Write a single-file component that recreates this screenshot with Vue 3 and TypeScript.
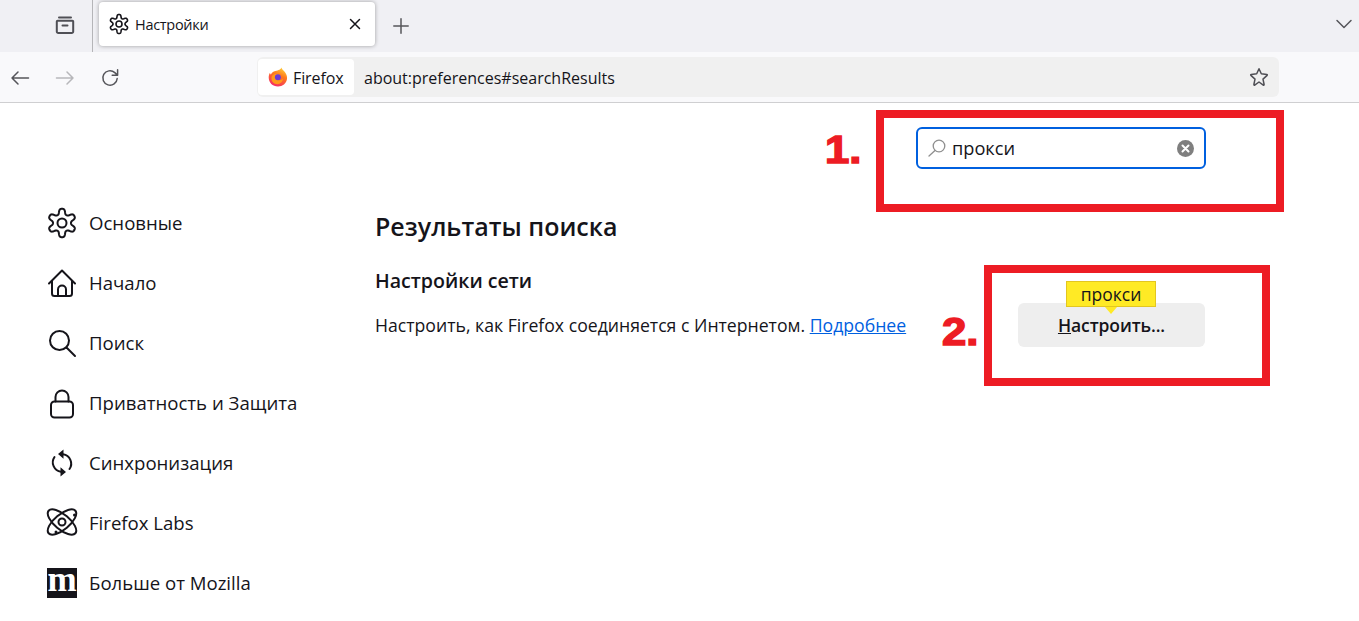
<script setup lang="ts">
interface NavItem { label: string; icon: string }
const nav: NavItem[] = [
  { label: 'Основные', icon: 'gear' },
  { label: 'Начало', icon: 'home' },
  { label: 'Поиск', icon: 'search' },
  { label: 'Приватность и Защита', icon: 'lock' },
  { label: 'Синхронизация', icon: 'sync' },
  { label: 'Firefox Labs', icon: 'labs' },
  { label: 'Больше от Mozilla', icon: 'moz' },
]
// Six-lobed gear outline, centred on 15,15 in a 30-unit box.
function gearPath(): string {
  const pts: string[] = []
  const steps = 144
  for (let i = 0; i < steps; i++) {
    const t = (i / steps) * Math.PI * 2
    const wave = Math.tanh(1.6 * Math.cos(6 * t)) / Math.tanh(1.6)
    const r = 11.6 + 2.6 * wave
    const x = 15 + r * Math.sin(t)
    const y = 15 - r * Math.cos(t)
    pts.push(`${i === 0 ? 'M' : 'L'}${x.toFixed(2)} ${y.toFixed(2)}`)
  }
  return pts.join('') + 'Z'
}
const gear = gearPath()
</script>

<template>
  <div class="page">
    <header class="tabbar">
      <div class="tab-left">
        <svg class="ico archive" viewBox="0 0 20 20" width="20" height="20"><path d="M4 2.500h12M2.600 5.800h14.800a.8.8 0 0 1 .8.8v10a1.500 1.500 0 0 1-1.500 1.500H3.300a1.500 1.500 0 0 1-1.500-1.500v-10a.8.8 0 0 1 .8-.8zM7.500 10.500h5" /></svg>
      </div>
      <div class="tab">
        <svg class="ico tab-gear" viewBox="0 0 30 30" width="20" height="20"><path :d="gear" /><circle cx="15" cy="15" r="4.500" /></svg>
        <span class="tab-title">Настройки</span>
        <svg class="ico tab-x" viewBox="0 0 12 12" width="12" height="12"><path d="M1.500 1.500l9 9M10.500 1.500l-9 9" /></svg>
      </div>
      <svg class="ico plus" viewBox="0 0 16 16" width="16" height="16"><path d="M8 .8v14.400M.8 8h14.400" /></svg>
      <svg class="ico chev" viewBox="0 0 16 10" width="16" height="10"><path d="M1 1.500l7 7 7-7" /></svg>
    </header>

    <nav class="toolbar">
      <svg class="ico tool" viewBox="0 0 18 14" width="18" height="14"><path d="M17.500 7H1M7 1L1 7l6 6" /></svg>
      <svg class="ico tool off" viewBox="0 0 18 14" width="18" height="14"><path d="M.5 7H17M11 1l6 6-6 6" /></svg>
      <svg class="ico tool" viewBox="0 0 18 18" width="18" height="18"><path d="M16.200 9.500A7.200 7.200 0 1 1 13.800 3.600L16.300 6M16.600.8v5.400h-5.400" /></svg>
      <div class="urlbar">
        <div class="chip">
          <svg class="fx" viewBox="0 0 20 20" width="20" height="20">
            <defs>
              <linearGradient id="fxa" x1="0.75" y1="0" x2="0.3" y2="1"><stop offset="0" stop-color="#ffd23c" /><stop offset=".4" stop-color="#ff7a1c" /><stop offset="1" stop-color="#f5296a" /></linearGradient>
            </defs>
            <path d="M13.500.5c.3 1.700 1.400 2.300 2.500 3.500 2.400 2.500 3.400 5.500 3 8-.6 4.500-4.400 7.500-9 7.500C4.500 19.500.7 15.500.7 10.500c0-1.800.4-3.600 1.300-4.800.1.900.4 1.500.9 1.900.6-1.700 2-2.900 3.600-3.400 2.500-.7 6-1 7-3.700z" fill="url(#fxa)" />
            <path d="M4.500 8.300c1.500-1.600 3.800-2 5.800-1.400 2 .6 3.200 2.500 2.400 4.200-.7 1.300-2.300 1.700-3.800 1.100 1.500 1.700 4.300 1.400 6-.6 0 3-2.400 5.600-5.600 5.600-3.200 0-5.800-2.600-5.800-5.700 0-1.200.2-2.200 1-3.200z" fill="#ff9a1a" />
            <circle cx="9.900" cy="10.200" r="3" fill="#6b3bd6" />
          </svg>
          <span class="chip-label">Firefox</span>
        </div>
        <span class="url">about:preferences#searchResults</span>
        <svg class="ico star" viewBox="0 0 20 20" width="20" height="20"><path d="M10 1.700l2.300 5.100 5.500.6c.5.100.7.700.3 1l-4.100 3.700 1.100 5.400c.1.500-.4.900-.8.600L10 15l-4.300 3.100c-.4.300-.9-.100-.8-.6L6 12.100 1.900 8.400c-.4-.3-.2-.9.300-1l5.500-.6z" /></svg>
      </div>
    </nav>

    <main class="prefs">
      <aside class="side">
        <div v-for="item in nav" :key="item.label" class="side-item">
          <span class="side-icon">
            <svg v-if="item.icon === 'gear'" class="ico" viewBox="0 0 30 30" width="30" height="30"><path :d="gear" /><circle cx="15" cy="15" r="4.500" /></svg>
            <svg v-else-if="item.icon === 'home'" class="ico" viewBox="0 0 30 30" width="30" height="30"><path d="M2 15.500L15 2.500l13 13M5 12.500v13a2.500 2.500 0 0 0 2.500 2.500h15a2.500 2.500 0 0 0 2.500-2.500v-13M11 28v-6.500a4 4 0 0 1 8 0V28" /></svg>
            <svg v-else-if="item.icon === 'search'" class="ico" viewBox="0 0 30 30" width="30" height="30"><circle cx="12.500" cy="12.500" r="9.500" /><path d="M19.500 19.500L28 28" /></svg>
            <svg v-else-if="item.icon === 'lock'" class="ico" viewBox="0 0 30 30" width="30" height="30"><rect x="4" y="13.500" width="22" height="16" rx="3.500" /><path d="M8.500 13.500V9a6.500 6.500 0 0 1 13 0v4.500" /></svg>
            <svg v-else-if="item.icon === 'sync'" class="ico" viewBox="0 0 30 30" width="30" height="30"><path d="M16 6.200A9.500 9.500 0 0 1 22.500 21M14 23.800A9.500 9.500 0 0 1 7.500 9" /><path class="fill" d="M16.500 1.500v9.200L11 6zM13.500 28.500v-9.200L19 24z" /></svg>
            <svg v-else-if="item.icon === 'labs'" class="ico" viewBox="0 0 30 30" width="30" height="30"><ellipse cx="15" cy="14" rx="17.500" ry="7.500" transform="rotate(40 15 14)" /><ellipse cx="15" cy="14" rx="17.500" ry="7.500" transform="rotate(-40 15 14)" /><circle cx="15" cy="14" r="3.500" /><circle class="fill" cx="27.500" cy="7" r="1.500" /><circle class="fill" cx="9" cy="24" r="1.500" /></svg>
            <span v-else class="moz">m</span>
          </span>
          <span class="side-label">{{ item.label }}</span>
        </div>
      </aside>

      <section class="content">
        <div class="search-row">
          <div class="search-box">
            <svg class="ico lens" viewBox="0 0 18 18" width="18" height="18"><circle cx="11" cy="7" r="5.800" /><path d="M7 11.500L1 17" /></svg>
            <span class="search-text">прокси</span>
            <svg class="clear" viewBox="0 0 17 17" width="17" height="17"><circle cx="8.500" cy="8.500" r="8.500" fill="#7f7f7f" /><path d="M5.500 5.500l6 6M11.500 5.500l-6 6" stroke="#fff" stroke-width="2" stroke-linecap="round" /></svg>
          </div>
        </div>
        <h1 class="title">Результаты поиска</h1>
        <div class="group">
          <div class="group-text">
            <h2 class="subtitle">Настройки сети</h2>
            <p class="desc">Настроить, как Firefox соединяется с Интернетом. <a class="link">Подробнее</a></p>
          </div>
          <div class="btn">
            <span class="spot">прокси</span>
            <span><u>Н</u>астроить...</span>
          </div>
        </div>
      </section>

      <div class="mark mark-1"></div>
      <span class="num num-1">1.</span>
      <div class="mark mark-2"></div>
      <span class="num num-2">2.</span>
    </main>
  </div>
</template>

<style>
html, body { margin: 0; background: #fff; overflow: hidden; }
</style>

<style scoped>
.page { width: 1359px; height: 621px; font-family: "Open Sans", "Noto Sans", sans-serif; color: #15141a; display: flex; flex-direction: column; overflow: hidden; }
.ico { fill: none; stroke: #15141a; stroke-width: 2; stroke-linecap: round; stroke-linejoin: round; flex: none; display: block; overflow: visible; }
.ico .fill { fill: #15141a; stroke: none; }

.tabbar { height: 52px; flex: none; background: #f0f0f4; display: flex; align-items: flex-start; box-sizing: border-box; }
.tab-left { width: 93px; height: 52px; box-sizing: border-box; border-right: 1px solid #b5b5b8; display: flex; align-items: center; justify-content: flex-end; padding: 0 17px 2px 0; margin-right: 5px; flex: none; }
.archive { stroke: #4f4f55; }
.tab { width: 276px; height: 44px; margin-top: 2px; background: #fff; border-radius: 4px; box-shadow: 0 0 4px rgba(0,0,0,.35); display: flex; align-items: center; padding: 0 14px 0 10px; box-sizing: border-box; flex: none; margin-left: 1px; }
.tab-gear { stroke-width: 2.400; }
.tab-title { font-size: 14.500px; margin-left: 6px; flex: 1; letter-spacing: -.3px; }
.tab-x { stroke-width: 1.500; }
.plus { stroke: #55555a; stroke-width: 1.500; margin: 18px 0 0 18px; }
.chev { stroke: #55555a; stroke-width: 1.500; margin: 19px 7px 0 auto; }

.toolbar { height: 51px; flex: none; box-sizing: border-box; background: #f9f9fb; border-bottom: 1px solid #cfcfd1; display: flex; align-items: center; padding-left: 11px; }
.tool { stroke: #55555a; stroke-width: 1.500; margin: 2px 27px 0 0; }
.tool.off { opacity: .4; }
.urlbar { width: 1022px; height: 40px; margin: 0 0 0 111px; background: #f0f0f0; border-radius: 6px; display: flex; align-items: center; padding-left: 1px; box-sizing: border-box; }
.chip { width: 96px; height: 36px; background: #fff; border-radius: 4px; display: flex; align-items: center; padding-left: 10px; box-sizing: border-box; flex: none; }
.fx { flex: none; }
.chip-label { font-size: 16px; margin-left: 5px; padding-top: 2px; letter-spacing: -.1px; }
.url { font-size: 16px; margin-left: 10px; padding-top: 2px; flex: 1; }
.star { stroke: #4f4f55; stroke-width: 1.500; margin-right: 10px; }

.prefs { flex: 1; display: flex; position: relative; min-height: 0; }
.side { width: 375px; flex: none; box-sizing: border-box; padding: 90px 0 0 47px; }
.side-item { height: 60px; display: flex; align-items: center; }
.side-icon { width: 30px; height: 30px; margin-right: 12px; flex: none; display: block; }
.side-label { font-size: 18.600px; margin-top: -2px; white-space: nowrap; }
.moz { display: flex; width: 30px; height: 30px; background: #15141a; color: #fff; font-family: "Liberation Serif", serif; font-weight: 700; font-size: 35px; line-height: 23px; align-items: flex-start; justify-content: center; }

.content { flex: 1; display: flex; flex-direction: column; min-width: 0; }
.search-row { padding: 24px 0 0 541px; }
.search-box { width: 290px; height: 42px; box-sizing: border-box; border: 2px solid #0060df; border-radius: 6px; display: flex; align-items: center; padding: 0 10px 0 10px; }
.lens { stroke: #8f8f8f; stroke-width: 1.300; }
.search-text { font-size: 18.200px; margin: -1px 0 0 6px; flex: 1; }
.clear { flex: none; display: block; }
.title { margin: 39px 0 0; font-size: 25px; font-weight: 600; line-height: 36px; }
.group { display: flex; margin-top: 23px; width: 830px; justify-content: space-between; }
.subtitle { margin: 0; font-size: 19.600px; font-weight: 600; line-height: 28px; }
.desc { margin: 16px 0 0; font-size: 17.650px; line-height: 28px; white-space: nowrap; }
.link { color: #0060df; text-decoration: underline; }
.btn { position: relative; width: 187px; height: 44px; margin-top: 36px; background: #eee; border-radius: 6px; display: flex; align-items: center; justify-content: center; font-size: 17.500px; font-weight: 600; letter-spacing: -.1px; }
.spot { position: absolute; left: 48px; top: -22px; width: 90px; height: 26px; box-sizing: border-box; background: #ffea25; border: 1px solid #e3c620; font-size: 17.500px; font-weight: 400; line-height: 25px; text-align: center; letter-spacing: 0; }
.spot::after { content: ""; position: absolute; left: 38px; bottom: -8px; width: 0; height: 0; border-left: 6px solid transparent; border-right: 6px solid transparent; border-top: 7px solid #ffea25; }

.mark { position: absolute; border: 8px solid #ed1c24; box-sizing: border-box; }
.mark-1 { left: 876px; top: 7px; width: 408px; height: 102px; }
.mark-2 { left: 984px; top: 162px; width: 286px; height: 121px; }
.num { position: absolute; color: #ed1c24; font-family: "Liberation Sans", sans-serif; font-weight: 700; font-size: 38px; line-height: 44px; -webkit-text-stroke: 1.500px #ed1c24; transform: scaleX(1.15); transform-origin: left center; }
.num-1 { left: 825px; top: 25px; }
.num-2 { left: 942px; top: 207px; }
</style>
